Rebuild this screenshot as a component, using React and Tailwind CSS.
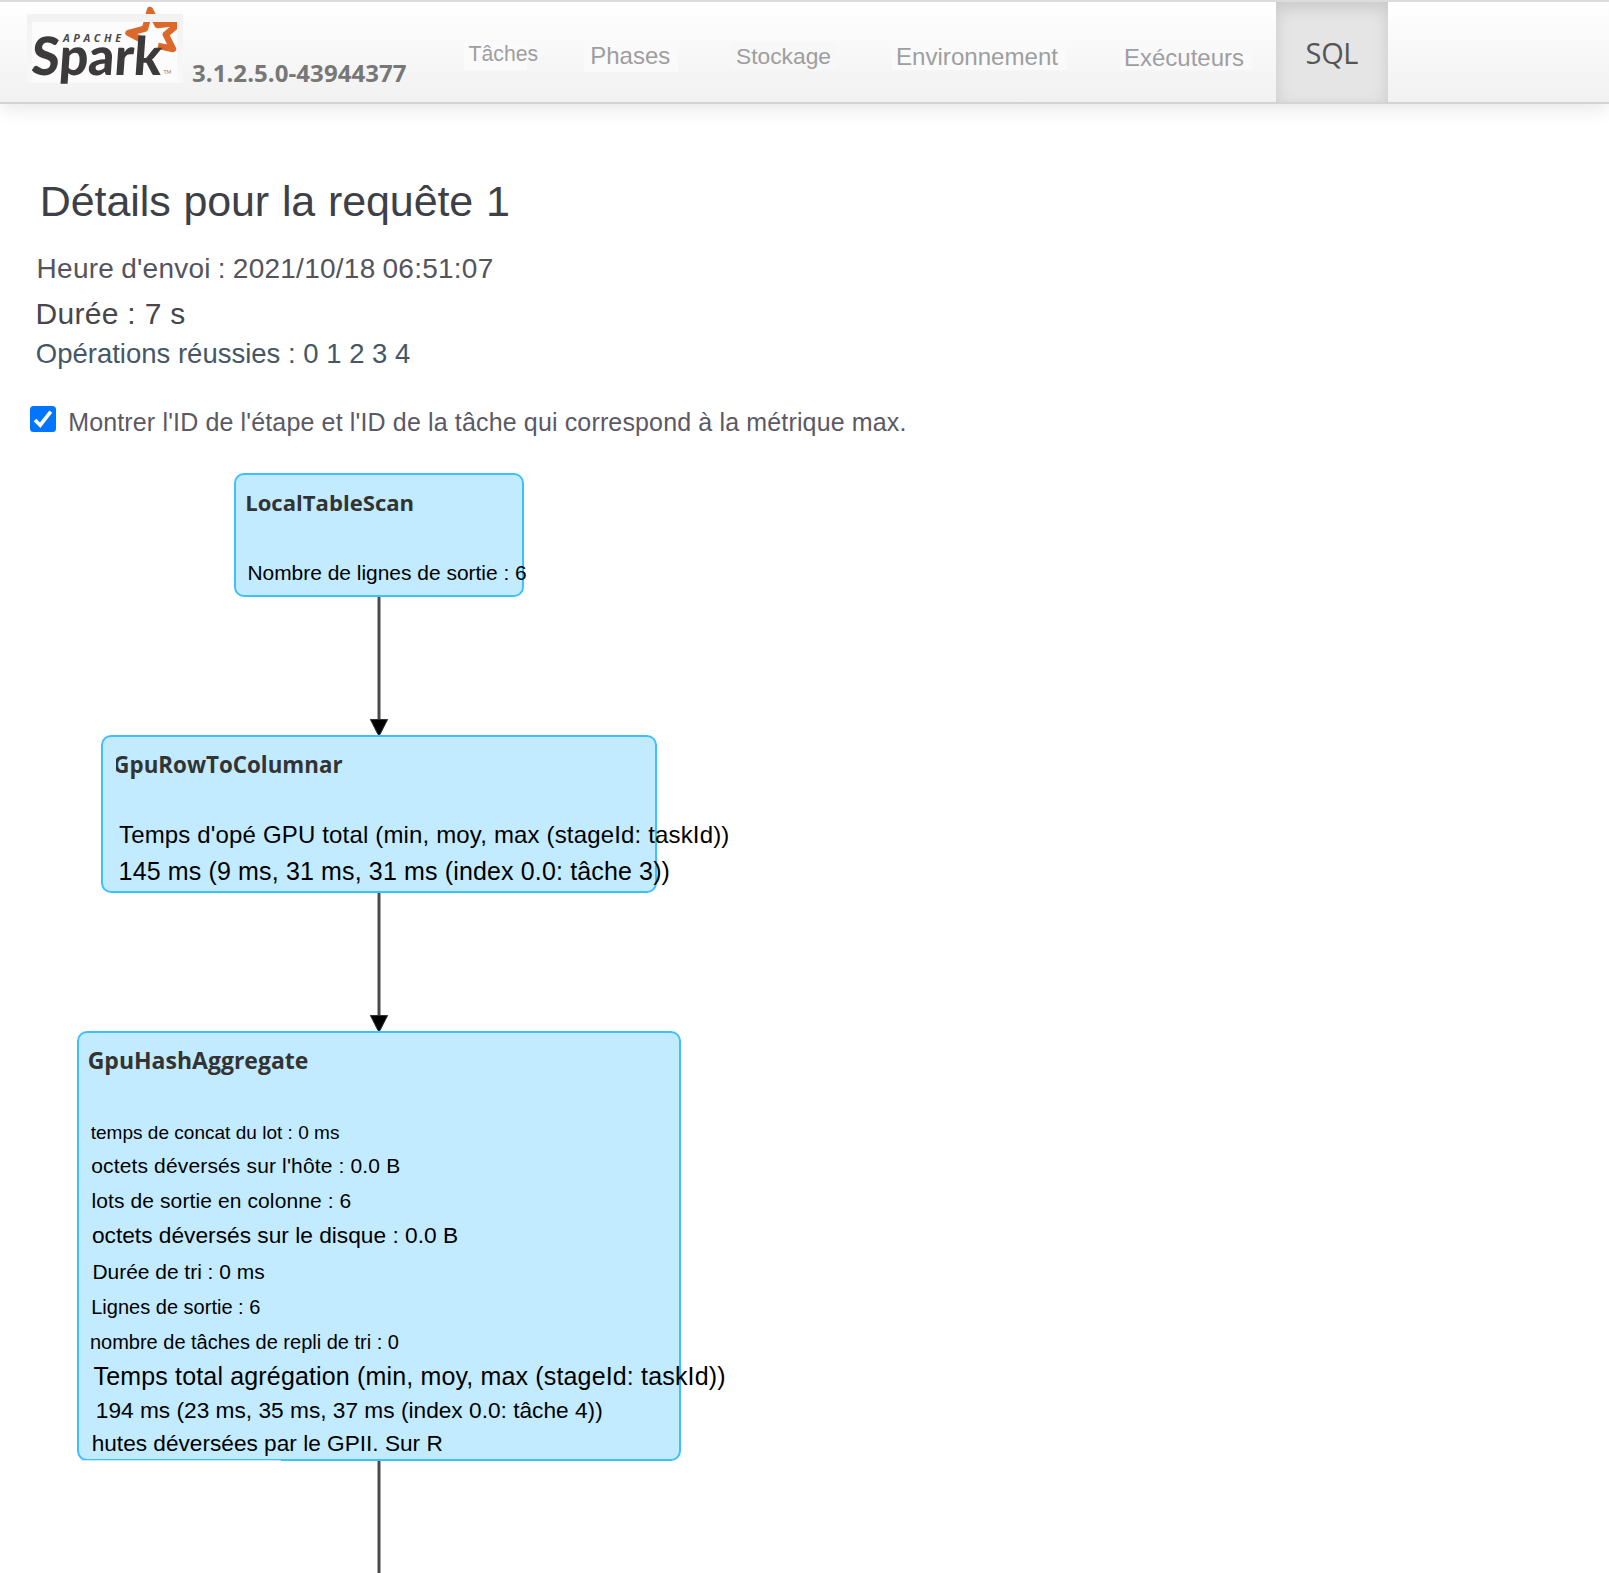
import React from "react";

function SparkLogo() {
  return (
    <svg className="block h-[84px] w-[157px] shrink-0" viewBox="27 2 157 84">
      <defs>
        <linearGradient id="band" x1="0" y1="0" x2="0" y2="1">
          <stop offset="0" stopColor="#f2f2f2" />
          <stop offset="1" stopColor="#f8f8f8" />
        </linearGradient>
        <clipPath id="plate">
          <rect x="32" y="22" width="145" height="64" />
          <rect x="27" y="2" width="156" height="12" />
        </clipPath>
      </defs>
      <rect x="27" y="14" width="156" height="69" fill="url(#band)" />
      <rect x="32" y="22" width="145" height="60" fill="#fcfcfc" />
      <g clipPath="url(#plate)">
        <path
          d="M139.5 38.6 L128.5 33 L145 28.6 L150 10 L157.6 25 L180 22.6 L165.8 34.5 L173 49 L158 45.8"
          fill="none"
          stroke="#dc682a"
          strokeWidth="6.4"
          strokeLinejoin="round"
        />
        <text
          transform="translate(30.5 75) skewX(-4)"
          fontFamily="Lato, sans-serif"
          fontWeight="900"
          fontSize="53"
          fill="#3c3a3a"
          textLength="130"
          lengthAdjust="spacingAndGlyphs"
        >
          Spark
        </text>
        <text
          x="63"
          y="41.8"
          fontFamily="Open Sans, sans-serif"
          fontWeight="700"
          fontStyle="italic"
          fontSize="10.8"
          fill="#4a4848"
          textLength="58"
        >
          APACHE
        </text>
        <text x="163.5" y="74" fontFamily="Lato, sans-serif" fontSize="5" fill="#777">
          TM
        </text>
      </g>
    </svg>
  );
}

function Header() {
  return (
    <header className="flex h-[104px] items-start border-t-2 border-b-2 border-t-[#dcdcdc] border-b-[#d3d3d3] bg-linear-to-b from-white to-[#f1f1f1] pl-[27px] whitespace-nowrap text-[#9e9e9e] shadow-[0_2px_20px_rgba(0,0,0,0.12)]">
      <SparkLogo />
      <span className="mt-[56px] ml-[8px] w-[216px] font-['Open_Sans',sans-serif] text-[24px] leading-[30px] font-bold tracking-[0.06px] text-[#777777]">
        3.1.2.5.0-43944377
      </span>
      <nav className="flex items-start">
        <a className="mt-[40px] ml-[56px] h-[28px] w-[63px] bg-[#fbfbfb] pl-[4.6px] text-[21.2px] leading-[24px]">Tâches</a>
        <a className="mt-[42px] ml-[57px] h-[28px] w-[94px] bg-[#fafafa] pl-[6.2px] text-[24px] leading-[24px]">Phases</a>
        <a className="mt-[40px] ml-[53px] h-[28px] w-[105px] bg-[#f7f7f7] pl-[5px] text-[22.8px] leading-[28px]">Stockage</a>
        <a className="mt-[43px] ml-[56px] h-[25px] w-[175px] bg-[#fafafa] pl-[4px] text-[24.1px] leading-[23px]">Environnement</a>
        <a className="mt-[44px] ml-[53px] h-[24px] w-[132px] bg-[#f9f9f9] pl-[4px] text-[24px] leading-[23px] text-[#9f9ea3]">Exécuteurs</a>
        <a className="ml-[24px] h-[100px] w-[112px] bg-[#e5e5e5] pl-[29.6px] font-['Open_Sans',sans-serif] text-[29px] leading-[102px] tracking-[-0.35px] text-[#555555] shadow-[inset_0_6px_16px_rgba(0,0,0,0.125)]">
          SQL
        </a>
      </nav>
    </header>
  );
}

function Arrow() {
  return (
    <svg className="block h-[138px] w-[20px]" viewBox="0 0 20 138">
      <path d="M10 0V124" stroke="#4a4a4a" strokeWidth="3" />
      <path d="M1.4 122.5H18.6L11 137.5H9Z" fill="#000" stroke="#333" strokeWidth="1" />
    </svg>
  );
}

const node = "rounded-[10px] border-2 border-[#3ec0ff] bg-[#c3ebff] whitespace-nowrap leading-[30px] text-black";
const heading = "font-['Open_Sans',sans-serif] font-bold text-[#333333]";

export default function App() {
  return (
    <div className="h-[1573px] w-[1609px] overflow-hidden bg-white font-['Liberation_Sans',Arial,sans-serif]">
      <Header />
      <main className="whitespace-nowrap">
        <h1 className="mt-[72px] pl-[39.8px] text-[43px] leading-[50px] tracking-[-0.1px] text-[#3d4046] [word-spacing:1px]">
          Détails pour la requête 1
        </h1>
        <p className="mt-[25px] pl-[36.6px] text-[28px] leading-[36px] tracking-[0.25px] text-[#55535c] [word-spacing:-1px]">
          Heure d'envoi : 2021/10/18 06:51:07
        </p>
        <p className="mt-[9px] pl-[35.4px] text-[30px] leading-[36px] tracking-[0.32px] text-[#46464b]">Durée : 7 s</p>
        <p className="mt-[4px] pl-[35.8px] text-[27.5px] leading-[36px] text-[#455766]">Opérations réussies : 0 1 2 3 4</p>
        <label className="mt-[34px] flex h-[32px] items-start pl-[30px] text-[25px] leading-[32px] tracking-[0.145px] text-[#5b5964]">
          <svg className="block h-[26px] w-[26px] shrink-0" viewBox="0 0 26 26">
            <rect width="26" height="26" rx="3.5" fill="#0075ff" />
            <path d="M5 14L10.2 19.2L20.8 5.6" fill="none" stroke="#fff" strokeWidth="3.6" />
          </svg>
          <span className="ml-[12.2px]">Montrer l'ID de l'étape et l'ID de la tâche qui correspond à la métrique max.</span>
        </label>

        <section className="mt-[35px] flex w-[758px] flex-col items-center">
          <div className={`${node} h-[124px] w-[290px]`}>
            <h2 className={`${heading} mt-[12px] pl-[9.2px] text-[22.1px]`}>LocalTableScan</h2>
            <p className="mt-[41px] pl-[11.4px] text-[20.95px]">Nombre de lignes de sortie : 6</p>
          </div>
          <Arrow />
          <div className={`${node} h-[158px] w-[556px]`}>
            <h2 className={`${heading} mt-[13px] ml-[13px] overflow-hidden indent-[-2.7px] text-[22.35px]`}>GpuRowToColumnar</h2>
            <p className="mt-[40px] pl-[16px] text-[24px] tracking-[0.16px]">
              Temps d'opé GPU total (min, moy, max (stageId: taskId))
            </p>
            <p className="mt-[6px] pl-[15.6px] text-[25px] tracking-[0.142px]">
              145 ms (9 ms, 31 ms, 31 ms (index 0.0: tâche 3))
            </p>
          </div>
          <Arrow />
          <div className={`${node} h-[430px] w-[604px]`}>
            <h2 className={`${heading} mt-[12px] pl-[8.7px] text-[23px]`}>GpuHashAggregate</h2>
            <p className="mt-[43px] pl-[11.7px] text-[19px] tracking-[0.02px]">temps de concat du lot : 0 ms</p>
            <p className="mt-[3px] pl-[12.2px] text-[21px] tracking-[0.15px]">octets déversés sur l'hôte : 0.0 B</p>
            <p className="mt-[5px] pl-[12.4px] text-[21px] tracking-[0.11px]">lots de sortie en colonne : 6</p>
            <p className="mt-[4px] pl-[12.9px] text-[22.72px]">octets déversés sur le disque : 0.0 B</p>
            <p className="mt-[7px] pl-[13.4px] text-[20.95px]">Durée de tri : 0 ms</p>
            <p className="mt-[5px] pl-[12.2px] text-[20px] tracking-[0.01px]">Lignes de sortie : 6</p>
            <p className="mt-[5px] pl-[10.9px] text-[20px]">nombre de tâches de repli de tri : 0</p>
            <p className="mt-[4px] pl-[14.6px] text-[25px] tracking-[0.155px]">
              Temps total agrégation (min, moy, max (stageId: taskId))
            </p>
            <p className="mt-[4px] pl-[16.8px] text-[22.7px]">194 ms (23 ms, 35 ms, 37 ms (index 0.0: tâche 4))</p>
            <p className="mt-[3px] pl-[12.7px] text-[22.65px]">hutes déversées par le GPII. Sur R</p>
            <div className="mt-px ml-[2px] h-px w-[200px] translate-y-px bg-[#c3ebff]" />
          </div>
          <svg className="block h-[112px] w-[20px]" viewBox="0 0 20 112">
            <path d="M10 0V112" stroke="#4a4a4a" strokeWidth="3" />
          </svg>
        </section>
      </main>
    </div>
  );
}
